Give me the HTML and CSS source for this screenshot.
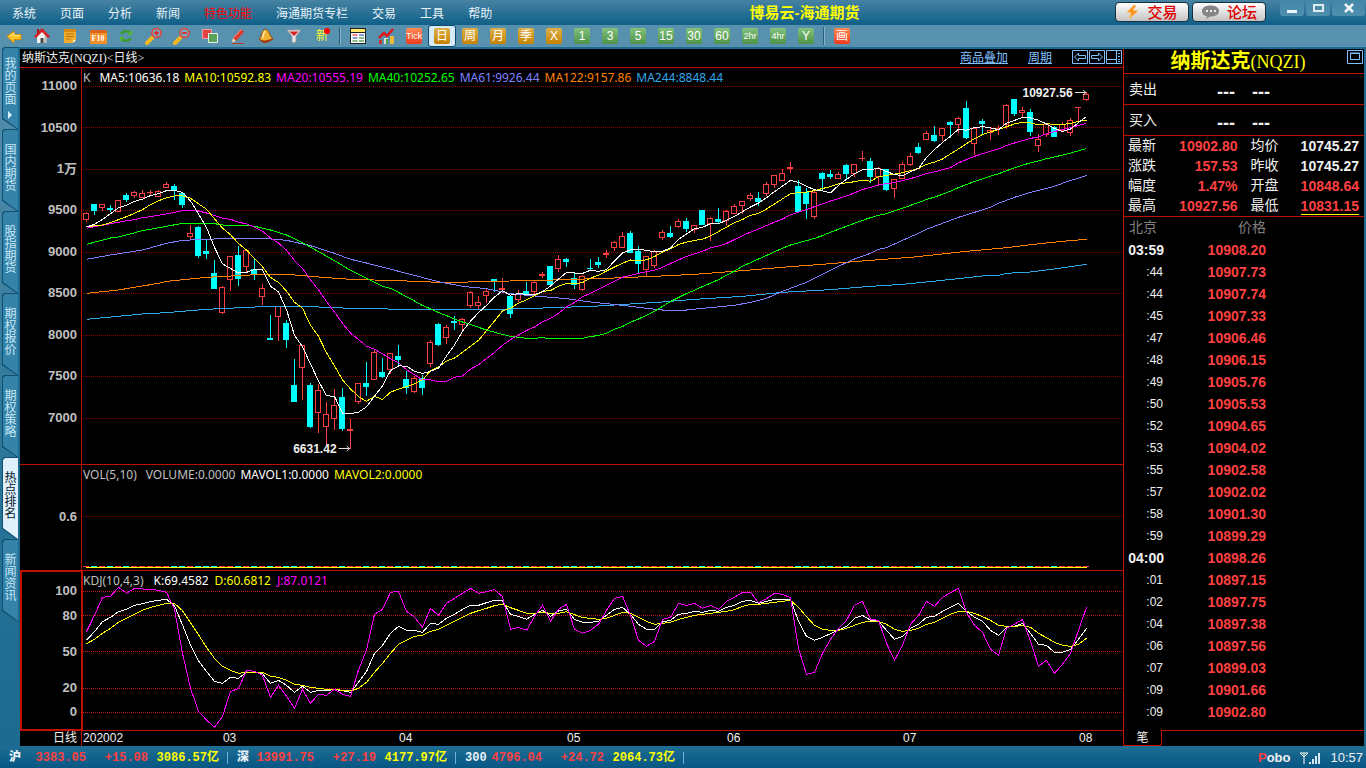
FILE: index.html
```html
<!DOCTYPE html>
<html lang="zh-CN">
<head>
<meta charset="utf-8">
<title>博易云-海通期货</title>
<link rel="stylesheet" href="styles.css">
</head>
<body>
<div class="app">
  <header class="topbar">
    <nav class="menu">
      <a href="#">系统</a><a href="#">页面</a><a href="#">分析</a><a href="#">新闻</a><a href="#" class="hot">特色功能</a><a href="#">海通期货专栏</a><a href="#">交易</a><a href="#">工具</a><a href="#">帮助</a>
    </nav>
    <h1 class="app-title">博易云-海通期货</h1>
    <div class="actions">
      <button class="pill"><svg width="14" height="16" viewBox="0 0 14 16"><path d="M8 1L1 8l4 1-2 6 9-8-5-1 3-4z" fill="#f7931e" stroke="#fbc37c" stroke-width="1"/></svg>交易</button>
      <button class="pill"><svg width="19" height="16" viewBox="0 0 19 16"><path d="M9.500 1.500C4.500 1.500 1 3.700 1 7s2.500 4.800 5 5.300L5 15l4-2.500c5 0 9-1.700 9-5.500 0-3.300-3.500-5.500-8.500-5.500z" fill="#858585"/><path d="M5 6h2v2H5zm4 0h2v2H9zm4 0h2v2h-2z" fill="#eee"/></svg>论坛</button>
    </div>
    <div class="win">
      <button aria-label="最小化"><svg width="12" height="12"><path d="M1 8h10v3H1z" fill="#eef4f8"/></svg></button>
      <button aria-label="最大化"><svg width="12" height="12"><path d="M2 3h9v6H2z" fill="none" stroke="#dfeaf1" stroke-width="2"/></svg></button>
      <button aria-label="关闭" class="close"><svg width="12" height="12"><path d="M2 2l8 8M10 2l-8 8" stroke="#eef4f8" stroke-width="2.600"/></svg></button>
    </div>
  </header>

  <div class="toolbar">
    <button aria-label="后退"><svg width="16" height="16"><path d="M1 8.500L8 3v3.500h7v5H8V15z" fill="#ffc425" stroke="#d98d00"/><path d="M4 8l4-3v2.500h6" fill="none" stroke="#ffe98a"/></svg></button>
    <button aria-label="首页"><svg width="16" height="16"><path d="M3 8l5-5 5 5v7H3z" fill="#f2f2f2"/><path d="M10 15h3V8l-2-2z" fill="#b5b5b5"/><path d="M0 8.500L8 0l8 8.500-2 1.500-6-6-6 6z" fill="#d61f26"/><path d="M3 1h2v4H3z" fill="#a11"/><path d="M6.500 10h3v5h-3z" fill="#4a4a4a"/></svg></button>
    <button aria-label="记事"><svg width="16" height="16"><path d="M2 1h12v11l-3 3H2z" fill="#f0ad2e"/><path d="M2 1h12v3H2z" fill="#d88b13"/><path d="M4 6h8M4 8.500h8M4 11h5" stroke="#b87410"/><path d="M14 12h-3v3z" fill="#fff0bb"/></svg></button>
    <button aria-label="F10" class="f10"><span>F10</span></button>
    <button aria-label="刷新"><svg width="16" height="16"><path d="M3 6c2-3 7-4 9-1M13 10c-2 3-7 4-9 1" fill="none" stroke="#3c9a2c" stroke-width="2.500"/><path d="M14 2v5H9zM2 14V9h5z" fill="#55b537"/></svg></button>
    <button aria-label="放大"><svg width="18" height="18"><path d="M2 16l5-5" stroke="#f5b81e" stroke-width="4" stroke-linecap="round"/><circle cx="11.500" cy="6" r="4.500" fill="#79a7bd" stroke="#e2433c" stroke-width="1.600"/><path d="M9 6h5M11.500 3.500v5" stroke="#e0201c" stroke-width="1.600"/></svg></button>
    <button aria-label="缩小"><svg width="18" height="18"><path d="M2 16l5-5" stroke="#f5b81e" stroke-width="4" stroke-linecap="round"/><circle cx="11.500" cy="6" r="4.500" fill="#79a7bd" stroke="#e2433c" stroke-width="1.600"/><path d="M9 6h5" stroke="#e0201c" stroke-width="1.600"/></svg></button>
    <button aria-label="叠加"><svg width="16" height="16"><path d="M.5 1.500h9v9h-9z" fill="#e14343" stroke="#f0a0a0"/><path d="M6.500 5.500h9v9h-9z" fill="#5aa35b" stroke="#e6f2e6"/></svg></button>
    <button aria-label="画线"><svg width="16" height="16"><path d="M3 10L11 1l3 3-8 9z" fill="#e2372b"/><path d="M4 9.500L11.500 1.500" stroke="#ff9a8c"/><path d="M3 10l3 3-4 1.500z" fill="#f8d9a8"/><path d="M2 15.500h12" stroke="#c23a2e"/></svg></button>
    <button aria-label="预警"><svg width="16" height="16"><path d="M7 1c3 1 4 3 5 6l3 4-9 4-5-4c4-2 1-7 6-10z" fill="#f2b233" stroke="#8c4a10"/><path d="M1 11c4 2 8 2 14-1-1 4-8 6-11 4z" fill="#a33c12"/><path d="M7 3c-2 2-1 5-3 7" stroke="#ffe9a8" fill="none" stroke-width="1.500"/></svg></button>
    <button aria-label="筛选"><svg width="16" height="16"><path d="M1 2h14l-5 6v6l-4 1V8z" fill="#e9e9ec" stroke="#9a9aa2"/><path d="M3.500 3.500h9L8 8z" fill="#d82222"/></svg></button>
    <button class="new">新<i></i></button>
    <hr>
    <button aria-label="报价"><svg width="16" height="16"><path d="M0 0h16v16H0z" fill="#222"/><path d="M1 1h14v3H1z" fill="#ffe76a"/><path d="M1 5h14v10H1z" fill="#fff"/><path d="M2.500 7h5" stroke="#e02"/><path d="M2.500 10h5M9 7h5" stroke="#1540a0"/><path d="M2.500 13h5M9 10h5M9 13h5" stroke="#171"/></svg></button>
    <button aria-label="走势"><svg width="16" height="16"><path d="M1 12h3v4H1z" fill="#c33"/><path d="M6 10h4v6H6z" fill="#ddd"/><path d="M8 11h2v5H8z" fill="#4a9b3c"/><path d="M12 8h4v8h-4z" fill="#f0b93a"/><path d="M1 10l5-5 3 3 6-7" fill="none" stroke="#e3151b" stroke-width="2.500"/></svg></button>
    <button class="badge red"><span class="narrow">Tick</span></button>
    <button class="badge gold on"><span>日</span></button>
    <button class="badge gold"><span>周</span></button>
    <button class="badge gold"><span>月</span></button>
    <button class="badge gold"><span>季</span></button>
    <button class="badge gold"><span>X</span></button>
    <button class="badge green"><span>1</span></button>
    <button class="badge green"><span>3</span></button>
    <button class="badge green"><span>5</span></button>
    <button class="badge green"><span>15</span></button>
    <button class="badge green"><span>30</span></button>
    <button class="badge green"><span>60</span></button>
    <button class="badge green"><span class="narrow">2hr</span></button>
    <button class="badge green"><span class="narrow">4hr</span></button>
    <button class="badge green"><span>Y</span></button>
    <hr>
    <button class="badge red"><span>画</span></button>
  </div>

  <main class="work">
    <nav class="tabs">
      <button>我的页面<i></i></button>
      <button>国内期货</button>
      <button>股指期货</button>
      <button>期权报价</button>
      <button>期权策略</button>
      <button class="on">热点排名</button>
      <button>新闻资讯</button>
    </nav>

    <section class="chart">
      <div class="chart-head">
        <h2>纳斯达克(NQZI)&lt;日线&gt;</h2>
        <a href="#">商品叠加</a>
        <a href="#">周期</a>
        <div class="head-icons">
          <button aria-label="左移"><svg width="16" height="14"><path d="M.5.5h15v13H.5zM2.500 7l4-4v2.500h7v3h-7V11z"/></svg></button>
          <button aria-label="右移"><svg width="16" height="14"><path d="M.5.5h15v13H.5zM13.500 7l-4-4v2.500h-7v3h7V11z"/></svg></button>
          <button aria-label="布局"><svg width="16" height="14"><path d="M.5.5h15v13H.5zM.5 9.500h10M10.500.5v13M12 3.500h2M12 6.500h2M12 9.500h2M12 11.500h2"/></svg></button>
        </div>
      </div>
      <div class="panes">
        <div class="axis" id="axis-price"></div>
        <div class="pane">
          <svg class="plot" id="plot-price" viewBox="82 68 1041 396" preserveAspectRatio="none"></svg>
          <p class="legend k"><span class="c-gray">K</span><span class="c-white">MA5:10636.18</span><span class="c-yellow">MA10:10592.83</span><span class="c-pink">MA20:10555.19</span><span class="c-green">MA40:10252.65</span><span class="c-violet">MA61:9926.44</span><span class="c-orange">MA122:9157.86</span><span class="c-blue">MA244:8848.44</span></p>
          <span class="mark high">10927.56<svg width="13" height="7"><path d="M1 3.500h11M9 1l3 2.500L9 6"/></svg></span>
          <span class="mark low">6631.42<svg width="13" height="7"><path d="M1 3.500h11M9 1l3 2.500L9 6"/></svg></span>
        </div>
        <div class="axis" id="axis-vol"></div>
        <div class="pane">
          <svg class="plot" id="plot-vol" viewBox="82 465 1041 105" preserveAspectRatio="none"></svg>
          <p class="legend named"><span class="c-gray">VOL(5,10)</span><span class="c-gray">VOLUME:0.0000</span><span class="c-white">MAVOL1:0.0000</span><span class="c-yellow">MAVOL2:0.0000</span></p>
        </div>
        <div class="axis active" id="axis-kdj"></div>
        <div class="pane">
          <svg class="plot" id="plot-kdj" viewBox="82 571 1041 159" preserveAspectRatio="none"></svg>
          <p class="legend named wide"><span class="c-gray">KDJ(10,4,3)</span><span class="c-white">K:69.4582</span><span class="c-yellow">D:60.6812</span><span class="c-pink">J:87.0121</span></p>
        </div>
        <div class="period">日线</div>
        <div class="months" id="months"></div>
      </div>
    </section>

    <aside class="quote">
      <div class="q-title"><h2>纳斯达克<span>(NQZI)</span></h2><button aria-label="展开"><svg width="16" height="14"><path d="M.5.5h15v13H.5z" fill="none" stroke="#80c0ff"/><path d="M3.500 3.500h9v6h-9zM3 3h10" fill="none" stroke="#80c0ff"/></svg></button></div>
      <div class="q-side"><span>卖出</span><b>---</b><b>---</b></div>
      <div class="q-side"><span>买入</span><b>---</b><b>---</b></div>
      <table class="stats">
        <tr><th>最新</th><td>10902.80</td><th>均价</th><td class="flat">10745.27</td></tr>
        <tr><th>涨跌</th><td>157.53</td><th>昨收</th><td class="flat">10745.27</td></tr>
        <tr><th>幅度</th><td>1.47%</td><th>开盘</th><td>10848.64</td></tr>
        <tr><th>最高</th><td>10927.56</td><th>最低</th><td><span class="mark-low">10831.15</span></td></tr>
      </table>
      <table class="ticks">
        <thead><tr><th>北京</th><th>价格</th><th></th></tr></thead>
        <tbody>
          <tr><td class="full">03:59</td><td>10908.20</td></tr>
          <tr><td>:44</td><td>10907.73</td></tr>
          <tr><td>:44</td><td>10907.74</td></tr>
          <tr><td>:45</td><td>10907.33</td></tr>
          <tr><td>:47</td><td>10906.46</td></tr>
          <tr><td>:48</td><td>10906.15</td></tr>
          <tr><td>:49</td><td>10905.76</td></tr>
          <tr><td>:50</td><td>10905.53</td></tr>
          <tr><td>:52</td><td>10904.65</td></tr>
          <tr><td>:53</td><td>10904.02</td></tr>
          <tr><td>:55</td><td>10902.58</td></tr>
          <tr><td>:57</td><td>10902.02</td></tr>
          <tr><td>:58</td><td>10901.30</td></tr>
          <tr><td>:59</td><td>10899.29</td></tr>
          <tr><td class="full">04:00</td><td>10898.26</td></tr>
          <tr><td>:01</td><td>10897.15</td></tr>
          <tr><td>:02</td><td>10897.75</td></tr>
          <tr><td>:04</td><td>10897.38</td></tr>
          <tr><td>:06</td><td>10897.56</td></tr>
          <tr><td>:07</td><td>10899.03</td></tr>
          <tr><td>:09</td><td>10901.66</td></tr>
          <tr><td>:09</td><td>10902.80</td></tr>
        </tbody>
      </table>
      <div class="q-tabs"><button>笔</button><span></span></div>
    </aside>
  </main>

  <footer class="status">
    <div class="idx"><b>沪</b><span class="up">3383.05</span><span class="up">+15.08</span><span class="amt">3086.57亿</span></div>
    <div class="idx"><b>深</b><span class="up">13991.75</span><span class="up">+27.19</span><span class="amt">4177.97亿</span></div>
    <div class="idx"><b>300</b><span class="up">4796.04</span><span class="up">+24.72</span><span class="amt">2064.73亿</span></div>
    <div class="sys">
      <span class="brand"><em>P</em>obo</span>
      <svg width="22" height="14"><path d="M1 2l4 4 4-4M5 2v11M1 2h8" fill="none" stroke="#fff"/><path d="M10 11h2v2h-2zM13 8h2v5h-2zM16 5h2v8h-2zM19 2h2v11h-2z" fill="#d8e8f0"/></svg>
      <time>10:57</time>
    </div>
  </footer>
</div>
<script src="chart.js"></script>
</body>
</html>
```
FILE: styles.css
```css
* { box-sizing: border-box; }
body {
  margin: 0;
  background: #1c6a8f;
  color: #f0f0f0;
  font: 12px/16px "Liberation Serif", "Noto Sans CJK SC", sans-serif;
}
button { margin: 0; padding: 0; border: 0; background: none; color: inherit; font: inherit; }
h1, h2, p { margin: 0; font: inherit; }
svg { display: block; }
.app { display: flex; flex-direction: column; height: 100vh; min-width: 1100px; overflow: hidden; }

.topbar { display: flex; height: 25px; background: linear-gradient(#4783a3, #0f5f88); }
.menu { display: flex; }
.menu a { padding: 0 12px; color: #e8f2f8; line-height: 26px; text-decoration: none; font-family: "Noto Sans CJK SC", sans-serif; }
.menu .hot { color: #f00; }
.app-title { flex: 1; padding-right: 10px; text-align: center; color: #ff0; font: bold 15px/25px "Liberation Sans", "Noto Sans CJK SC", sans-serif; }
.actions { display: flex; gap: 3px; padding: 2px 14px 0 0; }
.pill {
  display: flex; align-items: center; justify-content: center; gap: 7px;
  width: 74px; height: 20px; border: 1px solid #16303f; border-radius: 4px;
  background: linear-gradient(#fdfdfd, #c4c4c4); color: #e00000;
  font: 500 15px/18px "Noto Sans CJK SC", sans-serif;
}
.win { display: flex; gap: 2px; padding-right: 1px; }
.win button { display: flex; align-items: center; justify-content: center; width: 24px; height: 16px; background: linear-gradient(#4486a6, #4f8fae); border-radius: 0 0 3px 3px; }
.win .close { width: 33px; }

.toolbar { display: flex; height: 24px; background: #5891ae; border-bottom: 2px solid #1c6a8f; }
.toolbar button { display: flex; align-items: center; justify-content: center; width: 28px; height: 22px; }
.toolbar hr { width: 2px; height: 18px; margin: 2px 3px; border: 0; background: linear-gradient(90deg, #2c5f7c 50%, #86b2c8 50%); }
.f10 span { width: 17px; height: 14px; margin-top: 2px; background: #f4902a; border-top: 3px solid #d8651a; color: #fff; font: bold 8px/11px "Liberation Serif", serif; }
.toolbar .new { position: relative; color: #ffff30; font-size: 12px; }
.new i { position: absolute; left: 16px; top: 3px; width: 6px; height: 6px; border-radius: 3px; background: #f00; }
.badge span { width: 16px; height: 16px; border-radius: 2px; color: #fff; text-align: center; font: 12px/16px "Liberation Sans", "Noto Sans CJK SC", sans-serif; }
.badge .narrow { font-size: 9px; }
.gold span { background: linear-gradient(#dcb04a, #c68200); }
.green span { background: linear-gradient(#83c07c, #4d9347); }
.red span { background: linear-gradient(#ff8a50, #ee3b20); }
.toolbar .on { border: 1px solid #0e4a68; border-radius: 3px; background: #d6ebf9; }

.work { flex: 1; display: flex; min-height: 0; padding-right: 2px; }
.tabs { width: 20px; padding: 0 2px; margin-top: -2px; border-right: 2px solid #1c6a8f; background: linear-gradient(#5891ae, #2a7598 60%, #1c6a8f); }
.tabs button {
  position: relative; display: flex; align-items: center; width: 16px; height: 82px; padding: 14px 2px 0;
  writing-mode: vertical-rl; color: #c8e8f8; font: 12px/12px "Noto Sans CJK SC", sans-serif; isolation: isolate;
}
.tabs button:first-child { padding-top: 10px; }
.tabs button::before, .tabs button::after { content: ""; position: absolute; inset: 0 0 -1px; z-index: -2; background: #0f4f72; clip-path: polygon(0 2px, 2px 0, 100% 0, 100% 100%, 0 72px); }
.tabs button::after { inset: 1px 0 0 1px; z-index: -1; background: #3583a9; clip-path: polygon(0 2px, 2px 0, 100% 0, 100% 100%, 0 70px); }
.tabs .on { color: #06202e; }
.tabs .on::after { background: #dff0fb; }
.tabs i { margin-top: 6px; border-left: 4px solid #d8f0ff; border-top: 4px solid transparent; border-bottom: 4px solid transparent; align-self: center; }

.chart { flex: 1; display: flex; flex-direction: column; min-width: 0; background: #000; }
.chart-head { display: flex; align-items: center; height: 19px; padding: 0 1px 0 2px; border-bottom: 1px solid #c01000; }
.chart-head h2 { flex: 1; }
.chart-head a { margin-right: 20px; color: #80c0ff; }
.head-icons { display: flex; gap: 1px; padding-bottom: 2px; }
.head-icons path { fill: none; stroke: #80c0ff; }
.panes { flex: 1; display: grid; grid-template-columns: 62px 1fr; grid-template-rows: 397fr 106fr 160fr 15px; min-height: 0; }
.axis, .pane { position: relative; border-bottom: 1px solid #c01000; }
.axis, .period { border-right: 1px solid #c01000; }
.axis.active { margin: -1px -1px 0 0; border: 2px solid #c01000; }
.axis span { position: absolute; right: 4px; transform: translateY(-50%); color: #c0c0c0; font: bold 13px/16px "Liberation Sans", "Noto Sans CJK SC", sans-serif; }
.plot { position: absolute; inset: 0; width: 100%; height: 100%; shape-rendering: crispEdges; }
.plot polyline, .plot path { fill: none; }
.grid { stroke: #900000; stroke-dasharray: 1 1; }
.grid.strong { stroke: #c01818; }
.up-bar { fill: none; stroke: #ff4040; }
.up-fill { fill: #ff4040; }
.down-fill { fill: #0ff; }
.legend { position: relative; display: flex; gap: 5px; padding: 1px; white-space: pre; font: 12px/18px "Noto Sans", sans-serif; }
.legend.k .c-gray { margin-right: 4px; }
.legend.named span:first-child { margin-right: 4px; }
.legend.wide { gap: 6px; }
.c-gray { color: #c0c0c0; } .c-white { color: #fff; } .c-yellow { color: #ff0; } .c-pink { color: #f0f; }
.c-green { color: #0f0; } .c-violet { color: #8080ff; } .c-orange { color: #ff8000; } .c-blue { color: #30a8e8; }
.mark { position: absolute; display: flex; align-items: center; gap: 1px; transform: translate(-100%, -50%); color: #f0f0f0; font: bold 12px/16px "Liberation Sans", sans-serif; }
.mark path { fill: none; stroke: #ddd; }
.mark.high { left: 96.5%; top: 6.2%; }
.mark.low { left: 25.8%; top: 96.2%; }
.period { padding-right: 4px; text-align: right; line-height: 15px; }
.months { position: relative; font: 12px/15px "Liberation Sans", sans-serif; }
.months span { position: absolute; top: 0; }

.quote { display: flex; flex-direction: column; width: 241px; border-left: 1px solid #c01000; background: #000; }
.q-title { display: flex; height: 25px; padding: 1px 1px 0 5px; border-bottom: 1px solid #c01000; color: #ff0; }
.q-title button { align-self: flex-start; }
.q-title h2 { flex: 1; text-align: center; font: bold 20px/23px "Liberation Serif", "Noto Sans CJK SC", serif; }
.q-title h2 span { font-weight: normal; font-size: 18px; }
.q-side { display: flex; align-items: center; height: 31px; padding: 1px 0 0 5px; border-bottom: 1px solid #c01000; font-size: 14px; }
.q-side span { width: 88px; }
.q-side b { width: 35px; padding-top: 4px; font: bold 18px/20px "Liberation Sans", sans-serif; }
.stats, .ticks { border-collapse: collapse; table-layout: fixed; width: 100%; }
.stats { border-bottom: 1px solid #c01000; }
th, td { padding: 0; font-weight: normal; text-align: left; }
.stats th { width: 32px; padding-left: 4px; font-size: 14px; line-height: 20px; }
.stats th + td + th { padding-left: 13px; width: 45px; }
.stats td { text-align: right; color: #ff4040; font: bold 14px/20px "Liberation Sans", sans-serif; }
.stats td:last-child { padding-right: 5px; }
.stats .flat { color: #f0f0f0; }
.mark-low { box-shadow: 0 1px #ff0; }
.ticks { flex: none; }
.ticks tr { height: 22px; }
.ticks th { padding-left: 5px; font-size: 14px; line-height: 22px; color: #808080; }
.ticks th:first-child { width: 40px; }
.ticks th:nth-child(2) { width: 102px; padding: 0; text-align: right; }
.ticks td { text-align: right; color: #ff4040; font: bold 14px/22px "Liberation Sans", sans-serif; }
.ticks td:first-child { padding-right: 1px; color: #f0f0f0; font-size: 12px; font-weight: normal; }
.ticks td.full:first-child { padding-right: 0; font-size: 14px; font-weight: bold; }
.q-tabs { display: flex; height: 16px; margin-top: auto; }
.q-tabs button { width: 38px; border: 1px solid #c01000; border-width: 0 1px 1px 0; border-radius: 0 0 3px 0; font-size: 12px; line-height: 14px; }
.q-tabs span { flex: 1; border-top: 1px solid #c01000; }

.status { display: flex; align-items: center; height: 22px; padding: 2px 3px 0 9px; background: linear-gradient(#1f6e95, #075684); }
.idx { display: grid; grid-template-columns: 18px 59px 62px 71px 9px; width: 228px; text-align: right; white-space: nowrap; font: bold 12px/16px "Liberation Mono", "Noto Sans CJK SC", monospace; }
.idx b { text-align: left; color: #e8f2f8; }
.idx::after { content: ""; height: 12px; margin-top: 2px; border-right: 1px solid #6fb0e0; }
.up { color: #ff4040; }
.amt { color: #ff0; }
.sys { display: flex; align-items: center; gap: 9px; margin-left: auto; font: 13px/16px "Liberation Sans", sans-serif; }
.brand { font-weight: bold; }
.brand em { color: #ff4040; font-style: normal; }
```
FILE: chart.js
```js
const STEP = 8, FIRST = 86, COUNT = 126;
const NS = 'http://www.w3.org/2000/svg';

// Each bar: kind, high, top, bottom, low, in thirds of a unit below the block's base.
const blocks = [
  [70, `u 426 430 449 456,d 402 402 423 434,u 402 403 413 423,d 405 414 419 427,u 390 391 425 425,d 369 375 390 396,u 363 367 377 384,u 360 370 383 383,u 359 365 366 374,u 359 364 380 380,u 336 343 353 353,d 342 348 361 390,d 366 370 405 414,u 465 490 500 507,d 468 471 558 564,d 509 543 551 567,d 570 609 657 657,u 648 652 728 732,u 558 559 629 663,d 528 555 627 648,u 538 541 591 608,d 565 597 612 630,u 642 655 681 705,d 735 804 810 810,u 709 709 740 813,d 750 759 810 834,d 867 945 996 996,u 825 825 893 990,d 938 945 1071 1074,u 942 961 1028 1089,u 996 1033 1070 1125,u 957 1006 1046 1080,d 954 981 1077 1083,u 1047 1078 1082 1137,u 938 940 995 1001,d 876 939 951 978,u 838 847 929 929,d 864 906 921 924,u 849 850 899 912,d 825 858 870 885`],
  [180, `d 573 597 624 642,u 588 594 636 639,d 585 594 624 645,u 480 486 552 561,d 429 432 495 498,u 435 441 474 492,d 408 423 429 450,u 414 417 435 456,u 333 336 378 384,u 348 366 378 387,u 324 333 348 369,d 297 297 303 336,u 294 324 330 330,d 345 348 402 414,u 330 342 360 366,d 306 333 345 345,u 303 306 336 345,u 276 282 288 294,d 258 258 315 318,u 225 237 267 276,d 234 237 246 261,d 276 294 315 327,u 285 288 330 333,d 237 264 267 273,d 231 246 255 264,u 210 219 224 234,u 183 186 204 213,u 156 168 204 204,d 153 159 219 219,d 198 213 252 279,u 228 228 270 291,u 210 213 258 264,u 150 156 174 180,d 138 159 171 174,u 117 123 141 144,d 114 123 147 156,u 135 135 150 159,d 90 90 135 135,u 111 114 132 183,d 84 117 126 132,u 90 93 123 138,u 72 78 102 102,u 63 63 78 102`],
  [70, `u 370 376 387 393,d 366 384 396 408,u 336 343 372 378,u 315 316 346 354,u 298 310 332 332,u 276 291 296 309,d 330 348 426 429,d 354 367 402 447,u 358 367 440 447,d 306 309 327 363,d 300 312 321 327,u 306 313 326 326,d 282 285 312 327,u 282 283 312 321,u 243 265 268 273,d 264 273 321 339,u 291 294 322 348,d 297 297 360 363,u 327 328 356 384,u 276 283 328 328,u 249 259 284 288,d 219 231 249 252,u 183 190 209 209,d 168 195 213 216,u 174 175 197 213,d 153 156 165 204,u 141 145 164 189,d 93 114 204 207,u 175 175 221 255,d 147 153 162 192,u 171 181 188 210,u 165 174 178 195,u 102 106 164 177,d 87 87 132 138,u 112 121 128 141,d 117 126 186 198,u 192 208 227 246,u 159 163 194 201,d 168 171 201 201,u 156 163 183 183,u 144 151 188 198,u 111 111 114 153,u 66 73 89 93`]
];
const bars = blocks.flatMap(([base, text]) => text.split(',').map(row => {
  const [kind, ...v] = row.split(' ');
  const [high, top, bottom, low] = v.map(n => base + n / 3);
  return { up: kind === 'u', high, top, bottom, low, close: kind === 'u' ? top : bottom };
}));

const centre = i => FIRST + STEP * i;
function add(svg, name, attrs) {
  const el = document.createElementNS(NS, name);
  for (const key in attrs) el.setAttribute(key, attrs[key]);
  svg.appendChild(el);
}
function gridLines(svg, ys, cls) {
  ys.forEach(y => add(svg, 'path', { d: `M83 ${y + 0.5}H1123`, class: cls }));
}
function line(svg, ys, stroke) {
  add(svg, 'polyline', { points: ys.map((y, i) => `${centre(i) + 0.5},${y.toFixed(2)}`).join(' '), stroke });
}
// Fills the gaps between known "index:value" pairs.
function spread(text, base) {
  const pts = text.split(' ').map(p => p.split(':').map(Number));
  const out = [];
  for (let k = 0; k < pts.length - 1; k++) {
    const [i0, v0] = pts[k], [i1, v1] = pts[k + 1];
    for (let i = i0; i < i1; i++) out[i] = base + (v0 + (v1 - v0) * (i - i0) / (i1 - i0)) / 3;
  }
  const last = pts[pts.length - 1];
  out[last[0]] = base + last[1] / 3;
  return out;
}
function average(n, lead) {
  return bars.map((b, i) => i < n - 1 ? lead[i] : bars.slice(i - n + 1, i + 1).reduce((s, x) => s + x.close, 0) / n);
}

const price = document.getElementById('plot-price');
gridLines(price, [86, 127, 169, 210, 252, 293, 335, 376, 418], 'grid');
bars.forEach((b, i) => {
  const x = centre(i);
  const [h, t, m, l] = [b.high, b.top, b.bottom, b.low].map(Math.round);
  const cls = b.up ? 'up-fill' : 'down-fill';
  const height = Math.max(1, m - t);
  if (t > h) add(price, 'rect', { x, y: h, width: 1, height: t - h, class: cls });
  if (l > m) add(price, 'rect', { x, y: m, width: 1, height: l - m, class: cls });
  if (b.up && height > 2) add(price, 'rect', { x: x - 2.5, y: t + 0.5, width: 5, height: height - 1, class: 'up-bar' });
  else add(price, 'rect', { x: x - 3, y: t, width: 6, height, class: cls });
});
line(price, spread('0:748 7:732 10:728 15:718 22:710 28:710 33:715 40:718 52:718 56:715 64:708 72:696 76:688 82:679 87:667 93:659 98:649 102:643 107:631 112:618 114:616 115:610 118:606 121:597 125:583', 70), '#30a8e8');
line(price, spread('0:670 4:660 9:640 10:634 15:622 22:613 25:613 29:621 33:628 39:632 44:637 47:637 49:634 53:633 55:631 57:631 61:628 66:624 71:619 76:613 82:602 88:590 93:581 98:571 103:562 107:552 110:544 115:533 118:524 122:514 125:508', 70), '#ff8000');
line(price, spread('0:568 3:555 7:540 10:520 12:511 16:507 22:505 25:511 28:527 31:550 33:568 35:579 40:610 44:635 47:649 50:656 53:671 56:678 60:686 63:696 67:706 70:715 72:720 75:720 77:715 81:706 83:697 85:685 87:664 88:655 90:637 92:613 94:589 96:567 98:550 99:538 100:533 102:511 104:490 105:478 107:460 109:442 111:427 113:412 114:400 116:382 118:367 121:349 123:331 124:325 125:316', 70), '#8080ff');
line(price, average(40, spread('0:523 3:504 4:501 7:482 10:469 12:460 16:461 17:465 20:466 21:469 23:480 25:495 27:518 29:545 31:572 33:601 35:625 37:649 38:655 39:668', 70)), '#00ff00');
line(price, average(20, spread('0:475 1:470 2:466 3:461 4:457 5:452 6:449 7:443 8:440 9:436 10:432 11:427 12:422 13:421 14:423 15:429 16:436 17:445 18:448 19:454', 70)), '#ff00ff');
line(price, average(10, spread('0:471 1:467 2:465 3:458 4:449 5:440 6:430 7:419 8:404 9:392', 70)), '#ffff00');
line(price, average(5, spread('0:471 1:463 2:448 3:431 4:413', 70)), '#ffffff');

const vol = document.getElementById('plot-vol');
gridLines(vol, [516], 'grid');
bars.forEach((b, i) => add(vol, 'rect', { x: centre(i) - 3, y: 566, width: 6, height: 1, class: b.up ? 'up-fill' : 'down-fill' }));
add(vol, 'path', { d: 'M86 567.5H1087', stroke: '#ffff00' });

const kdj = document.getElementById('plot-kdj');
gridLines(kdj, [591, 615, 651, 688, 712], 'grid strong');
const run = (a, b) => a.split(' ').map(v => 460 + v / 3).concat(b.split(' ').map(v => 560 + v / 3));
line(kdj, run(
  '540 515 485 472 455 448 436 431 425 421 418 437 495 555 602 634 664 670 652 655 636 636 641 670 661 676 697 679 697 691 693 688 692 697 667 635 580 556 520 499 511 511 517 490 493 475 463 448',
  '136 136 128 121 123 163 169 178 163 151 169 153 148 178 187 187 184 166 148 142 163 193 208 208 186 181 163 160 154 157 151 154 142 136 124 121 130 124 118 118 118 184 229 241 232 221 210 199 175 166 181 184 211 238 229 205 193 172 169 154 142 130 154 172 184 211 226 202 199 190 220 253 256 277 277 268 238 205'), '#ffffff');
line(kdj, run(
  '551 538 520 505 487 475 463 451 442 436 430 430 452 488 524 562 595 619 631 640 637 637 637 649 652 661 673 676 682 685 688 688 691 693 685 667 637 610 580 553 541 529 526 514 508 496 484 472',
  '160 152 145 137 133 143 151 160 160 157 160 160 155 164 173 175 178 175 166 157 160 172 184 193 190 187 178 172 166 163 160 157 154 149 139 133 133 130 127 124 121 142 170 196 208 211 211 205 196 187 184 184 193 208 214 211 205 193 187 175 163 154 154 160 170 181 196 199 199 197 202 220 233 247 256 259 253 235'), '#ffff00');
line(kdj, run(
  '515 466 412 409 382 400 385 387 388 391 397 448 580 685 754 780 802 769 695 685 631 634 646 712 676 709 745 688 730 703 706 688 703 709 630 570 463 448 397 394 454 472 502 445 466 430 415 400',
  '85 100 95 89 110 208 202 211 169 136 184 148 133 208 220 211 193 151 115 109 166 241 259 244 178 172 130 136 130 145 136 148 124 112 97 97 128 116 100 103 113 265 343 337 280 238 205 181 136 124 178 181 250 301 256 193 166 124 139 112 98 85 157 196 217 268 286 205 193 178 244 319 301 340 313 280 211 142'), '#ff00ff');

function axis(id, top, height, labels) {
  const box = document.getElementById(id);
  labels.forEach(([text, y]) => {
    const span = document.createElement('span');
    span.textContent = text;
    span.style.top = `${((y + 0.5 - top) / height * 100).toFixed(2)}%`;
    box.appendChild(span);
  });
}
axis('axis-price', 68, 396, [['11000', 86], ['10500', 127], ['1万', 169], ['9500', 210], ['9000', 252], ['8500', 293], ['8000', 335], ['7500', 376], ['7000', 418]]);
axis('axis-vol', 465, 105, [['0.6', 516]]);
axis('axis-kdj', 572, 157, [['100', 591], ['80', 615], ['50', 651], ['20', 688], ['0', 712]]);

const months = document.getElementById('months');
[['202002', 83], ['03', 223], ['04', 399], ['05', 567], ['06', 727], ['07', 903], ['08', 1079]].forEach(([text, x]) => {
  const span = document.createElement('span');
  span.textContent = text;
  span.style.left = `${((x - 82) / 1041 * 100).toFixed(2)}%`;
  months.appendChild(span);
});
```
